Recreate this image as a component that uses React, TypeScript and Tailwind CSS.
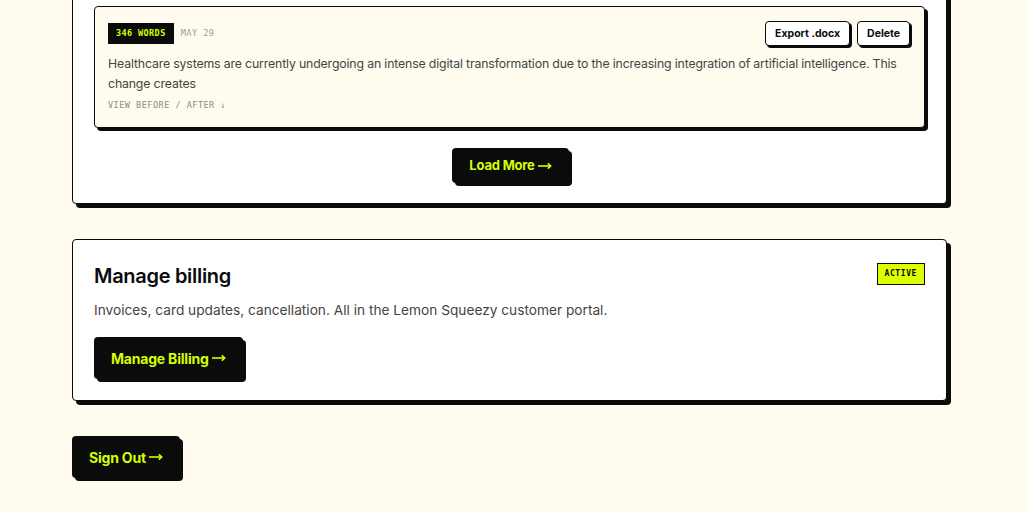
import React from 'react';

const mono = "font-['DejaVu_Sans_Mono','Liberation_Mono',monospace]";

const Arrow = () => (
  <svg width="14" height="8" viewBox="0 0 14 8" className="ml-[3px]" fill="none" stroke="currentColor" strokeWidth="1.6">
    <path d="M0 4h12.5" />
    <path d="M9.8 1.3l2.9 2.7-2.9 2.7" />
  </svg>
);

const BlackButton: React.FC<{ label: string; className?: string }> = ({ label, className = '' }) => (
  <button
    className={`bg-[#0b0b0b] text-[#d4ff00] font-bold rounded-[4px] shadow-[3px_3px_0_#0b0b0b] tracking-[-0.2px] flex items-center ${className}`}
  >
    {label}
    <Arrow />
  </button>
);

export default function App() {
  return (
    <div className="min-h-[516px] bg-[#fffcef] font-['Inter','Liberation_Sans',sans-serif] text-[#0b0b0b]">
      <div className="w-[875px] ml-[72px] pb-[35px]">
        {/* History card, scrolled past its top */}
        <div className="-mt-[20px] bg-white border border-[#0b0b0b] rounded-[4px] shadow-[4px_4px_0_#0b0b0b] px-[21px] pt-[25px] pb-[20px]">
          <div className="bg-[#fffcef] border border-[#0b0b0b] rounded-[4px] shadow-[3px_3px_0_#0b0b0b] px-[13px] pt-[14px] pb-[16px]">
            <div className="flex items-start justify-between">
              <div className="flex items-center gap-[7px] pt-[2px]">
                <span className={`${mono} bg-[#0b0b0b] text-[#d4ff00] text-[8.5px] font-bold tracking-[0.4px] px-[8px] h-[21px] flex items-center`}>
                  346 WORDS
                </span>
                <span className={`${mono} text-[8.5px] text-[#9a9a9a] tracking-[0.5px]`}>MAY 29</span>
              </div>
              <div className="flex gap-[7px] pr-[1px]">
                <button className="bg-white border border-[#0b0b0b] rounded-[4px] shadow-[2px_2px_0_#0b0b0b] text-[10.5px] font-bold h-[25px] px-[9px]">
                  Export .docx
                </button>
                <button className="bg-white border border-[#0b0b0b] rounded-[4px] shadow-[2px_2px_0_#0b0b0b] text-[10.5px] font-bold h-[25px] px-[9px]">
                  Delete
                </button>
              </div>
            </div>
            <p className="mt-[8px] text-[12.3px] leading-[20px] text-[#444] tracking-[-0.15px]">
              Healthcare systems are currently undergoing an intense digital transformation due to the increasing integration of artificial intelligence. This change creates
            </p>
            <div className={`${mono} mt-[5px] text-[8.5px] leading-[12px] text-[#8a8a8a] tracking-[0.5px]`}>VIEW BEFORE / AFTER ↓</div>
          </div>
          <div className="flex justify-center mt-[20px]">
            <BlackButton label="Load More" className="h-[35px] px-[17px] text-[13px] ml-[2px]" />
          </div>
        </div>

        {/* Billing card */}
        <div className="mt-[35px] bg-white border border-[#0b0b0b] rounded-[4px] shadow-[4px_4px_0_#0b0b0b] px-[21px] pt-[23px] pb-[21px]">
          <div className="flex items-start justify-between">
            <h2 className="text-[20px] font-semibold tracking-[-0.3px] leading-[26px]">Manage billing</h2>
            <span className={`${mono} bg-[#dfff00] border border-[#0b0b0b] text-[8px] font-bold tracking-[0.6px] h-[22px] px-[7px] flex items-center`}>
              ACTIVE
            </span>
          </div>
          <p className="mt-[11px] text-[13.7px] leading-[20px] text-[#444]">
            Invoices, card updates, cancellation. All in the Lemon Squeezy customer portal.
          </p>
          <BlackButton label="Manage Billing" className="mt-[17px] h-[42px] px-[17px] text-[14px]" />
        </div>

        <BlackButton label="Sign Out" className="mt-[35px] h-[42px] px-[17px] text-[14px]" />
      </div>
    </div>
  );
}
